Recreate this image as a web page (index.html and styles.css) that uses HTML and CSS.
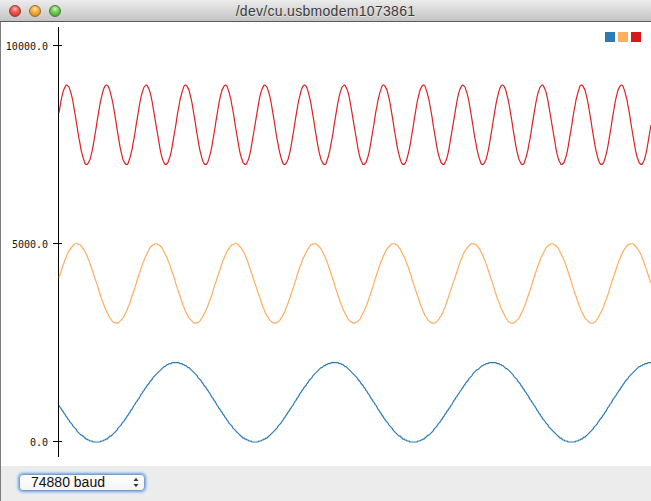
FILE: index.html
```html
<!DOCTYPE html>
<html>
<head>
<meta charset="utf-8">
<title>/dev/cu.usbmodem1073861</title>
<link rel="stylesheet" href="styles.css">
</head>
<body>
<div class="window">
  <div class="titlebar">
    <div class="lights">
      <span class="light light-close"></span>
      <span class="light light-min"></span>
      <span class="light light-max"></span>
    </div>
    <div class="title">/dev/cu.usbmodem1073861</div>
  </div>
  <div class="plot">
    <svg class="chart" id="chart" width="651" height="444" viewBox="0 22 651 444" xmlns="http://www.w3.org/2000/svg">
      <line class="axis" x1="58.5" y1="27" x2="58.5" y2="457"/>
      <line class="axis" x1="53" y1="45.5" x2="62" y2="45.5"/>
      <line class="axis" x1="53" y1="243.5" x2="62" y2="243.5"/>
      <line class="axis" x1="53" y1="441.5" x2="62" y2="441.5"/>
      <text class="tick-label" x="48" y="50">10000.0</text>
      <text class="tick-label" x="48" y="248">5000.0</text>
      <text class="tick-label" x="48" y="446">0.0</text>
      <polyline class="series series-blue" id="s0" points=""/>
      <polyline class="series series-orange" id="s1" points=""/>
      <polyline class="series series-red" id="s2" points=""/>
    </svg>
    <div class="legend">
      <span class="swatch swatch-blue"></span>
      <span class="swatch swatch-orange"></span>
      <span class="swatch swatch-red"></span>
    </div>
  </div>
  <div class="footer">
    <div class="popup">
      <span class="popup-label">74880 baud</span>
      <svg class="popup-arrows" width="6" height="11" viewBox="0 0 6 11" xmlns="http://www.w3.org/2000/svg">
        <path d="M0.5 4 L3 0.8 L5.5 4 Z" fill="#3a3a3a"/>
        <path d="M0.5 7 L3 10.2 L5.5 7 Z" fill="#3a3a3a"/>
      </svg>
    </div>
  </div>
</div>
<script src="script.js"></script>
</body>
</html>
```

FILE: styles.css
```css
html, body {
  margin: 0;
  padding: 0;
  background: #ffffff;
}

.window {
  width: 651px;
  height: 501px;
  overflow: hidden;
  display: flex;
  flex-direction: column;
  font-family: "Liberation Sans", "DejaVu Sans", sans-serif;
}

.titlebar {
  height: 21px;
  flex: none;
  display: grid;
  align-items: center;
  background: linear-gradient(#ececec, #d6d6d6 55%, #c4c4c4);
  border-bottom: 1px solid #5a5a5a;
}

.lights,
.title {
  grid-area: 1 / 1;
}

.lights {
  justify-self: start;
  display: flex;
  gap: 8px;
  padding-left: 9px;
}

.light {
  width: 12px;
  height: 12px;
  border-radius: 50%;
  box-sizing: border-box;
}

.light-close {
  background: radial-gradient(circle at 50% 30%, #ffc3bd 0, #f4625a 35%, #c9221a 100%);
  border: 1px solid #9b3a34;
}

.light-min {
  background: radial-gradient(circle at 50% 30%, #ffe6b0 0, #f5b548 35%, #cc7c12 100%);
  border: 1px solid #9a6a26;
}

.light-max {
  background: radial-gradient(circle at 50% 30%, #d6f6c4 0, #7fcf5d 35%, #3d9625 100%);
  border: 1px solid #4a7d35;
}

.title {
  justify-self: center;
  font-size: 14px;
  letter-spacing: 0.3px;
  color: #3c3c3c;
  text-shadow: 0 1px 0 rgba(255, 255, 255, 0.5);
}

.plot {
  flex: none;
  height: 444px;
  background: #ffffff;
  position: relative;
  box-shadow: inset 1px 0 0 #7c7c7c;
}

.chart {
  display: block;
}

.axis {
  stroke: #000000;
  stroke-width: 1;
  shape-rendering: crispEdges;
}

.tick-label {
  font-family: "DejaVu Sans Mono", monospace;
  font-size: 10px;
  text-anchor: end;
  fill: #111111;
}

.series {
  fill: none;
  stroke-width: 1.2;
  stroke-linejoin: round;
}

.series-blue { stroke: #2c7bb6; }
.series-orange { stroke: #fdae61; }
.series-red { stroke: #dd2226; }

.legend {
  position: absolute;
  top: 10px;
  right: 10px;
  display: flex;
  gap: 3px;
}

.swatch {
  width: 10px;
  height: 10px;
}

.swatch-blue { background: #2c7bb6; }
.swatch-orange { background: #fdae61; }
.swatch-red { background: #d7191c; }

.footer {
  flex: 1;
  background: #ececec;
  box-shadow: inset 1px 0 0 #7c7c7c;
  padding: 8px 0 0 19px;
}

.popup {
  width: 126px;
  height: 17px;
  box-sizing: border-box;
  border: 1px solid #7d9cc8;
  border-radius: 4px;
  background: linear-gradient(#ffffff, #f4f4f4);
  box-shadow: 0 0 0 1px #93bbee, 0 0 2px 2px #a9c9f2;
  display: flex;
  align-items: center;
  justify-content: space-between;
  padding: 0 5px 0 11px;
}

.popup-label {
  font-size: 14px;
  color: #111111;
  line-height: 15px;
}

.popup-arrows {
  display: block;
}
```

FILE: script.js
```js
(function () {
  var X0 = 57;
  function yOf(v) { return 442 - v * 0.03965; }
  var defs = [
    function (x) { return 1000 - 1000 * Math.sin(2 * Math.PI * (x - X0) / 158.4); },
    function (x) { return 4000 + 1000 * Math.sin(2 * Math.PI * (x - X0) / 79.2); },
    function (x) { return 8000 + 1000 * Math.sin(2 * Math.PI * (x - X0) / 39.6); }
  ];
  for (var i = 0; i < defs.length; i++) {
    var pts = [];
    for (var x = 59; x <= 651; x += 1) {
      var v = Math.round(defs[i](x) / 25) * 25;
      pts.push(x + "," + yOf(v).toFixed(2));
    }
    document.getElementById("s" + i).setAttribute("points", pts.join(" "));
  }
})();
```
